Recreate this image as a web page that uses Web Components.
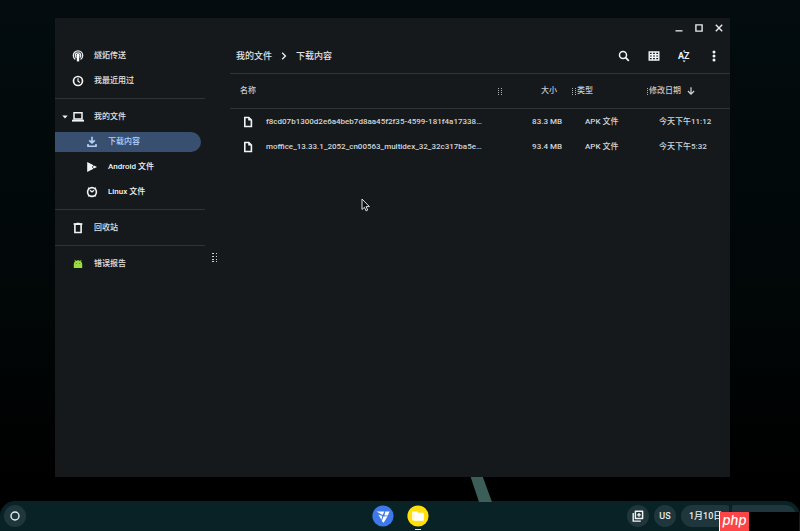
<!DOCTYPE html>
<html lang="zh-CN">
<head>
<meta charset="utf-8">
<title>我的文件</title>
<style>
html, body { height: 100%; }
body {
  margin: 0; overflow: hidden; background: #000;
  font: 400 8px/12px Roboto, "Noto Sans CJK SC", sans-serif; color: #e2e4e6;
}
</style>
</head>
<body>
<desk-top></desk-top>
<script>
const ICONS = {
  share: '<svg width="12" height="12" viewBox="0 0 12 12"><g fill="none" stroke="#e8eaed"><circle cx="6" cy="5.5" r="4.7" stroke-width="1.3" stroke-dasharray="24 5.5" stroke-dashoffset="-10"/><circle cx="6" cy="5.5" r="2.7" stroke-width="1.3" stroke-dasharray="13.5 3.5" stroke-dashoffset="-5.8"/></g><circle cx="6" cy="5.3" r="1.5" fill="#fff"/><path d="M4.8 6h2.4v5.4H4.8z" fill="#fff"/></svg>',
  recent: '<svg width="12" height="12" viewBox="0 0 12 12" fill="none" stroke="#f1f3f4"><circle cx="6" cy="6" r="4.5" stroke-width="1.7"/><path d="M6 3.2V6.2L7.9 7.5" stroke-width="1.2"/></svg>',
  laptop: '<svg width="12" height="12" viewBox="0 0 12 12"><path d="M2 1.8h8v6.3H2z" fill="none" stroke="#f1f3f4" stroke-width="1.5"/><path d="M0 8.7h12v1.9H0z" fill="#f1f3f4"/></svg>',
  download: '<svg width="12" height="12" viewBox="0 0 12 12" fill="none" stroke="#b5d2fb" stroke-width="1.6"><path d="M6 .8v6M3.2 4.3 6 7l2.8-2.7M2 8v2.2h8V8"/></svg>',
  play: '<svg width="12" height="12" viewBox="0 0 12 12"><path d="M1.2 1 11 6 1.2 11z" fill="#f1f3f4"/><path d="M6.2 5.8 9 3.4M6.2 6.2 9 8.6" stroke="#16191c" stroke-width=".8"/></svg>',
  linux: '<svg width="12" height="12" viewBox="0 0 12 12" fill="none" stroke="#f1f3f4"><circle cx="6" cy="6" r="4.4" stroke-width="1.6"/><path d="M3.4 2.8 2 1.8M8.6 2.8 10 1.8M3.4 9.2 2 10.3M8.6 9.2 10 10.3" stroke-width="1.1"/><path d="M4 4.2 6 6l2-1.8" stroke-width="1.3"/></svg>',
  trash: '<svg width="12" height="12" viewBox="0 0 12 12"><path d="M2.9 2.3h6.2v8.2H2.9z" fill="none" stroke="#f1f3f4" stroke-width="1.6"/><path d="M1.6 1.3h2.6L4.8.7h2.4l.6.6h2.6v1.5H1.6z" fill="#f1f3f4"/></svg>',
  android: '<svg width="12" height="12" viewBox="0 0 12 12"><path d="M1.8 10V6.2Q1.8 4.2 3.2 3.3L2.4 2l.6-.3.9 1.2Q6 1.8 8.1 2.9L9 1.7l.6.3-.8 1.3q1.4.9 1.4 2.9V10z" fill="#9bdc3f"/><path d="M3.8 5h1v1h-1zM7.2 5h1v1h-1z" fill="#5b8f20"/></svg>',
  file: '<svg width="12" height="12" viewBox="0 0 12 12"><path d="M2.8 1.5h4l2.6 2.6v6.4H2.8z" fill="none" stroke="#f1f3f4" stroke-width="1.6"/><path d="M6.2 1.2v3.4h3.4z" fill="#f1f3f4"/></svg>',
  caret: '<svg width="6" height="4" viewBox="0 0 6 4"><path d="M.3.5h5.4L3 3.4z" fill="#f1f3f4"/></svg>',
  chevron: '<svg width="6" height="8" viewBox="0 0 6 8"><path d="M1.2.8 4.4 4 1.2 7.2" fill="none" stroke="#e8eaed" stroke-width="1.4"/></svg>',
  grip: '<svg width="4" height="8" viewBox="0 0 4 8" fill="#aeb2b6"><path d="M0 1h1v1H0zM3 1h1v1H3zM0 3h1v1H0zM3 3h1v1H3zM0 5h1v1H0zM3 5h1v1H3zM0 7h1v1H0zM3 7h1v1H3z"/></svg>',
  gripEdge: '<svg width="2" height="8" viewBox="0 0 2 8" fill="#aeb2b6"><path d="M0 1h1v1H0zM0 3h1v1H0zM0 5h1v1H0zM0 7h1v1H0z"/></svg>',
  gripWide: '<svg width="6" height="10" viewBox="0 0 6 10" fill="#d0d3d6"><path d="M0 0h2v1H0zM4 0h1v1H4zM0 3h2v1H0zM4 3h1v1H4zM0 6h2v1H0zM4 6h1v1H4zM0 8h2v1H0zM4 8h1v1H4z"/></svg>',
  sortDown: '<svg width="8" height="8" viewBox="0 0 8 8"><path d="M4 .2v6.8M.9 4 4 7.1 7.1 4" fill="none" stroke="#d4d7da" stroke-width="1.2"/></svg>',
  min: '<svg width="10" height="10" viewBox="0 0 10 10"><path d="M1.5 7.2h7v1.3h-7z" fill="#e8eaed"/></svg>',
  max: '<svg width="10" height="10" viewBox="0 0 10 10"><path d="M1.9 1.9h6.2v6.2H1.9z" fill="none" stroke="#e8eaed" stroke-width="1.4"/></svg>',
  close: '<svg width="10" height="10" viewBox="0 0 10 10"><path d="m1.8 1.8 6.4 6.4M8.2 1.8 1.8 8.2" stroke="#e8eaed" stroke-width="1.4"/></svg>',
  search: '<svg width="12" height="12" viewBox="0 0 12 12" fill="none" stroke="#f1f3f4"><circle cx="5" cy="5" r="3.5" stroke-width="1.5"/><path d="m7.4 7.4 3.4 3.4" stroke-width="1.8"/></svg>',
  grid: '<svg width="12" height="12" viewBox="0 0 12 12"><path d="M1.2 2h9.6v8H1.2zM1.2 4.7h9.6M1.2 7.3h9.6M4.4 2v8M7.6 2v8" fill="none" stroke="#f1f3f4" stroke-width="1.4"/></svg>',
  sort: '<svg width="14" height="14" viewBox="0 0 14 14" fill="#f1f3f4"><text x="1" y="10" font-family="Roboto" font-size="9" font-weight="700">A</text><text x="7" y="10" font-family="Roboto" font-size="9" font-weight="700">Z</text><path d="M5.6 2.6h3L7.1 1zM5.6 11.6h3L7.1 13.2z"/></svg>',
  more: '<svg width="12" height="12" viewBox="0 0 12 12" fill="#f1f3f4"><circle cx="6" cy="1.9" r="1.5"/><circle cx="6" cy="6" r="1.5"/><circle cx="6" cy="10.1" r="1.5"/></svg>',
  launcher: '<svg width="12" height="12" viewBox="0 0 12 12"><circle cx="6" cy="6" r="4" fill="none" stroke="#e2efef" stroke-width="1.4"/></svg>',
  fyde: '<svg width="22" height="22" viewBox="0 0 22 22"><circle cx="11" cy="11" r="10.6" fill="#3f78ea"/><path d="M4.4 6.6h8L10.6 10z M13.4 6.4h4.2l-1.8 4.1h-3.4z M6.3 9.4l4 1.7-.9 3.6z M11.4 11.6l4.2-.3-4 6.4-1.8-1.8z" fill="#fff"/></svg>',
  files: '<svg width="22" height="22" viewBox="0 0 22 22"><circle cx="11" cy="11" r="10.6" fill="#ffdf0d"/><path d="M5.2 6.6h5l1 1.2h5.6v8H7.6l-2.4-.9z" fill="#fff"/><path d="M6.8 8v6.6" stroke="#f3e9a8" stroke-width=".7"/></svg>',
  capture: '<svg width="14" height="14" viewBox="0 0 14 14"><path d="M4.4 2.2h7.2v7.4H4.4z" fill="none" stroke="#f1f3f4" stroke-width="1.5" stroke-linejoin="round"/><path d="M2.2 4v8.1h7.6M8 4v3.8M6.1 5.9h3.8" fill="none" stroke="#f1f3f4" stroke-width="1.4"/></svg>'
};
const BUTTON = 'button{font:inherit;color:inherit;background:none;border:0;padding:0;margin:0;display:flex;align-items:center;justify-content:center}svg{display:block;flex:none}';
function define(name, render) {
  customElements.define(name, class extends HTMLElement {
    connectedCallback() {
      if (this.shadowRoot) return;
      this.attachShadow({ mode: 'open' }).innerHTML = render(this);
    }
  });
}

define('ui-icon', el => `<style>:host{display:block;flex:none}svg{display:block}</style>${ICONS[el.getAttribute('name')]}`);

define('icon-button', el => `<style>${BUTTON}:host{display:block}button{width:var(--w,20px);height:20px}</style>
<button aria-label="${el.getAttribute('label')}"><ui-icon name="${el.getAttribute('icon')}"></ui-icon></button>`);

define('nav-item', el => `<style>${BUTTON}
:host{display:block;padding:3px 4px 2px 0}
button{width:100%;height:20px;justify-content:flex-start;padding-left:7px;gap:10px;border-radius:0 10px 10px 0;white-space:nowrap}
.lead{width:6px;flex:none}
.lead+ui-icon{margin-left:-6px}
:host([child]) button{padding-left:21px;color:#f1f3f4}
:host([selected]) button{background:#394f6f;color:#b5d2fb}
</style><button><span class="lead">${el.hasAttribute('open') ? '<ui-icon name="caret"></ui-icon>' : ''}</span><ui-icon name="${el.getAttribute('icon')}"></ui-icon><slot></slot></button>`);

define('nav-group', () => `<style>:host{display:block;padding-bottom:5px}:host(:not(:last-child)){border-bottom:1px solid #303438;margin-bottom:5px}</style><slot></slot>`);

define('side-nav', () => `<style>:host{display:block;width:150px;flex:none;padding-top:5px;font-weight:500}</style>
<nav aria-label="位置">
<nav-group><nav-item icon="share">燧炻传送</nav-item><nav-item icon="recent">我最近用过</nav-item></nav-group>
<nav-group><nav-item icon="laptop" open>我的文件</nav-item><nav-item icon="download" child selected>下载内容</nav-item><nav-item icon="play" child>Android 文件</nav-item><nav-item icon="linux" child>Linux 文件</nav-item></nav-group>
<nav-group><nav-item icon="trash">回收站</nav-item></nav-group>
<nav-group><nav-item icon="android">错误报告</nav-item></nav-group>
</nav>`);

define('tool-bar', () => `<style>${BUTTON}
:host{display:flex;align-items:center;height:35px;padding:0 1px 0 6px;border-bottom:1px solid #303438;font-size:9px;font-weight:500}
nav{display:flex;align-items:center;gap:9px;flex:1}
a{color:inherit;text-decoration:none}
icon-button{--w:30px}
</style><nav aria-label="路径"><a href="#files">我的文件</a><ui-icon name="chevron"></ui-icon><a href="#downloads">下载内容</a></nav>
<icon-button icon="search" label="搜索"></icon-button><icon-button icon="grid" label="网格视图"></icon-button><icon-button icon="sort" label="排序"></icon-button><icon-button icon="more" label="更多"></icon-button>`);

define('file-table', () => {
  const rows = [
    ['f8cd07b1300d2e6a4beb7d8aa45f2f35-4599-181f4a17338…', '83.3 MB', '今天下午11:12'],
    ['moffice_13.33.1_2052_cn00563_multidex_32_32c317ba5e…', '93.4 MB', '今天下午5:32']
  ];
  return `<style>
:host{display:block}
table{width:100%;table-layout:fixed;border-collapse:separate;border-spacing:0;color:#d2d5d8}
th,td{padding:0;text-align:left;font-weight:500;white-space:nowrap}
th{height:34px;border-bottom:1px solid #303438;color:#c4c8cc}
td{height:25px}
.size{width:70px}.type{width:75px}.date{width:83px}
.cell{display:flex;align-items:center}
th .name{padding-left:10px;justify-content:space-between}
td .name{padding-left:12px;gap:12px}
th.size .cell{justify-content:flex-end;padding-right:15px}
td.size .cell{justify-content:flex-end;padding-right:10px}
th.type .cell{gap:1px}
td.type .cell{padding-left:13px}
td.date .cell{padding-left:12px}
.sorted{margin-left:6px}
</style><table><thead><tr>
<th scope="col"><div class="cell name">名称<ui-icon name="grip"></ui-icon></div></th>
<th scope="col" class="size"><div class="cell">大小</div></th>
<th scope="col" class="type"><div class="cell"><ui-icon name="grip"></ui-icon>类型</div></th>
<th scope="col" class="date"><div class="cell"><ui-icon name="gripEdge"></ui-icon>修改日期<ui-icon class="sorted" name="sortDown"></ui-icon></div></th>
</tr></thead><tbody>${rows.map(([n, s, d]) => `<tr><td><div class="cell name"><ui-icon name="file"></ui-icon>${n}</div></td><td class="size"><div class="cell">${s}</div></td><td class="type"><div class="cell">APK 文件</div></td><td class="date"><div class="cell">${d}</div></td></tr>`).join('')}</tbody></table>`;
});

define('file-window', () => `<style>
:host{display:flex;flex-direction:column;background:#16191c}
header{display:flex;justify-content:flex-end;padding-right:1px}
.body{display:flex;flex:1}
.resizer{width:25px;flex:none;display:flex;align-items:center;padding-left:7px;box-sizing:border-box}
main{flex:1;min-width:0}
</style><header><icon-button icon="min" label="最小化"></icon-button><icon-button icon="max" label="最大化"></icon-button><icon-button icon="close" label="关闭"></icon-button></header>
<div class="body"><side-nav></side-nav><div class="resizer"><ui-icon name="gripWide"></ui-icon></div><main><tool-bar></tool-bar><file-table></file-table></main></div>`);

define('task-shelf', () => `<style>${BUTTON}
:host{display:grid;grid-template-columns:1fr auto 1fr;align-items:center;height:30px;box-sizing:border-box;padding:0 4px;border-radius:15px 15px 0 0;background:#092226}
.round,.pill{height:22px;border-radius:11px;background:#1f373c;font-size:9px;font-weight:500;color:#e8eeee}
.round{width:22px}
.apps{display:flex;gap:13px}
.app{position:relative}
.app.open::after{content:"";position:absolute;left:8px;bottom:-3px;width:6px;height:1px;background:#d6dfdf}
.status{display:flex;justify-content:flex-end;gap:5px}
.tray{display:flex;gap:3px}
.date{width:48px;border-radius:11px 2px 2px 11px;justify-content:flex-start;padding-left:8px;white-space:nowrap;overflow:hidden}
.system{width:64px;border-radius:2px 11px 11px 2px}
</style><div><button class="round" aria-label="启动器"><ui-icon name="launcher"></ui-icon></button></div>
<div class="apps"><button class="app" aria-label="FydeOS"><ui-icon name="fyde"></ui-icon></button><button class="app open" aria-label="文件"><ui-icon name="files"></ui-icon></button></div>
<div class="status"><button class="round" aria-label="截图"><ui-icon name="capture"></ui-icon></button><button class="round">US</button><div class="tray"><button class="pill date">1月10日</button><button class="pill system" aria-label="系统"></button></div></div>`);

define('site-badge', () => `<style>
:host{position:absolute;right:1px;bottom:0;width:80px;height:19px;display:flex;background:#000}
span{width:29px;background:#fd4446;border-left:1px solid #fff;color:#fff;font:italic 500 13px/16px Inter,sans-serif;text-align:center}
</style><span>php</span>`);

define('desk-top', () => `<style>
:host{display:flex;flex-direction:column;height:100vh;position:relative;background:linear-gradient(#030c0e,#010607 60%,#000 90%)}
.space{flex:1;display:flex;padding:18px 70px 24px 55px}
file-window{flex:1;position:relative}
.streak{position:absolute;right:304px;bottom:29px}
.pointer{position:absolute;left:361px;top:198px}
</style>
<svg class="streak" width="27" height="30" viewBox="0 0 27 30"><path d="M0 0h12l11 30H10z" fill="#3b5f58"/></svg>
<div class="space"><file-window></file-window></div><task-shelf></task-shelf>
<svg class="pointer" width="10" height="15" viewBox="0 0 10 15"><path d="M1 1v10.5l2.4-2.2 1.7 3.6 1.6-.8L5.1 8.6H8.4z" fill="#0c0e10" stroke="#dfe1e3" stroke-width="1"/></svg>
<site-badge></site-badge>`);
</script>
</body>
</html>
